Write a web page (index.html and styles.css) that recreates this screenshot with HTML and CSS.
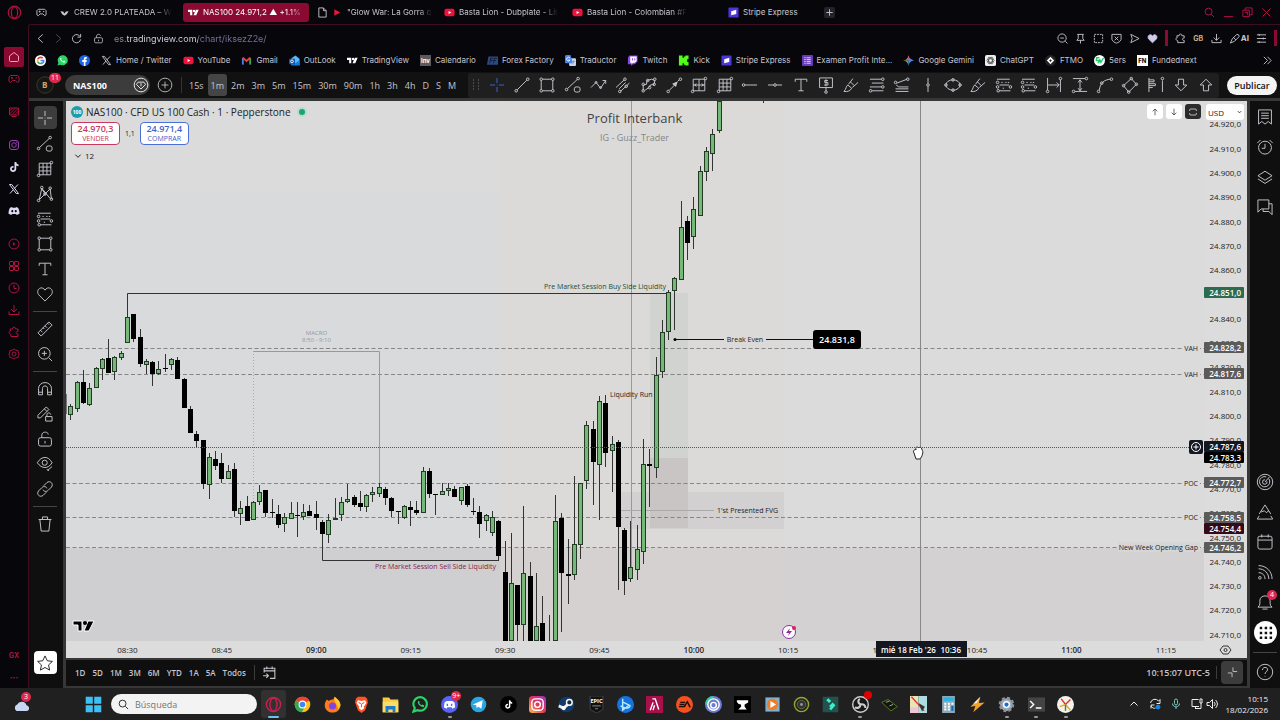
FILE: index.html
```html
<!DOCTYPE html>
<html lang="es">
<head>
<meta charset="UTF-8" />
<meta name="viewport" content="width=device-width, initial-scale=1" />
<title>NAS100 24.971,2 ▲ +1.1%</title>
<link rel="stylesheet" href="styles.css">
</head>
<body>

<!-- Shared icons -->
<svg class="sprite" aria-hidden="true">
  <symbol id="opera" viewBox="0 0 24 24"><circle cx="12" cy="12" r="10"/><ellipse cx="12" cy="12" rx="5" ry="9"/></symbol>
  <symbol id="pad" viewBox="0 0 24 24"><path d="M5 5h14l3 3v9l-3 2-4-4H9l-4 4-3-2V8z"/><path d="M6 10h4M8 8v4M15 10h3"/></symbol>
  <symbol id="home" viewBox="0 0 24 24"><path d="M3 10l9-7 9 7v9a2 2 0 0 1-2 2H5a2 2 0 0 1-2-2z"/></symbol>
  <symbol id="hatch" viewBox="0 0 24 24"><path d="M3 4h18v14H3zM7 21h10M3 10l6-6M3 16L15 4M7 18L20 5M13 18l8-8"/></symbol>
  <symbol id="insta" viewBox="0 0 24 24"><rect x="3" y="3" width="18" height="18" rx="5"/><circle cx="12" cy="12" r="4.500"/><circle cx="17.500" cy="6.500" r=".6"/></symbol>
  <symbol id="tiktok" viewBox="0 0 24 24"><path class="solid" d="M13 2h3.500c.3 3 2 4.500 4.500 4.700v3.600c-1.800 0-3.200-.5-4.500-1.400V16c0 8-12.500 8-12.500 0 0-4 3.300-6.500 7-6v3.800c-2-.5-3.400.6-3.400 2.300 0 3.200 5.400 3.100 5.400-.5z"/></symbol>
  <symbol id="xlogo" viewBox="0 0 24 24"><path d="M3 3h4.500L21 21h-4.500zM20 3l-7.500 8M4 21l7-8"/></symbol>
  <symbol id="discord" viewBox="0 0 24 24"><path class="solid" fill-rule="evenodd" d="M8 4l1 1.500h6L16 4l4 1.500c2 3.500 3 7.500 3 12L17.500 20 16 18H8l-1.500 2L1 17.500c0-4.500 1-8.500 3-12zM8.500 10a2 2.300 0 1 0 .1 4.600 2 2.300 0 0 0 0-4.600zm7 0a2 2.300 0 1 0 .1 4.600 2 2.300 0 0 0 0-4.600z"/></symbol>
  <symbol id="playc" viewBox="0 0 24 24"><circle cx="12" cy="12" r="10"/><path class="solid" d="M10 8.500l5 3.500-5 3.500z"/></symbol>
  <symbol id="tiles" viewBox="0 0 24 24"><rect x="3" y="3" width="8" height="8" rx="1"/><rect x="13" y="3" width="8" height="8" rx="1"/><rect x="3" y="13" width="8" height="8" rx="1"/><rect x="13" y="13" width="8" height="8" rx="1"/></symbol>
  <symbol id="clock" viewBox="0 0 24 24"><circle cx="12" cy="12" r="10"/><path d="M12 5v8h5"/></symbol>
  <symbol id="down" viewBox="0 0 24 24"><path d="M12 2v14M6 10l6 6 6-6M2 15v6h20v-6"/></symbol>
  <symbol id="puzzle" viewBox="0 0 24 24"><path d="M4 6h5c-1-5 7-5 6 0h5v5c-5-1-5 6 0 5v5H6v-4c-5-1-5-7-1-7z"/></symbol>
  <symbol id="gear" viewBox="0 0 24 24"><path d="M12 2l3 2 5 1 1 5 1 2-1 3-1 4-5 1-3 2-3-2-5-1-1-4-1-3 1-2 1-5 5-1z"/><circle cx="12" cy="12" r="4"/></symbol>
  <symbol id="tv" viewBox="0 0 36 20"><path class="solid" d="M0 1h14v18H7V8H0zM26 1h9l-8 18h-9z"/><circle class="solid" cx="20" cy="5" r="4"/></symbol>
  <symbol id="yt" viewBox="0 0 24 24"><rect x="1" y="4" width="22" height="16" rx="4" fill="#f0133b" stroke="none"/><path d="M10 8.500l6 3.500-6 3.500z" fill="#fff" stroke="none"/></symbol>
  <symbol id="stripe" viewBox="0 0 24 24"><rect x="1" y="1" width="22" height="22" rx="2" fill="#4b36d6" stroke="none"/><path d="M7 9l11-3v9L7 18z" fill="#fff" stroke="none"/></symbol>
  <symbol id="doc" viewBox="0 0 24 24"><path d="M4 2h10l6 6v14H4zM14 2v6h6"/></symbol>
  <symbol id="search" viewBox="0 0 24 24"><circle cx="10" cy="10" r="7.500"/><path d="M16 16l6 6"/></symbol>
  <symbol id="wa" viewBox="0 0 24 24"><path d="M1 23l2-6A11 11 0 1 1 7 21z" fill="#2cd366" stroke="none"/><path d="M8 6c-4 4 5 13 10 10l0-2-3-2-2 2c-2-1-3-2-4-4l1-1-1-3z" fill="#fff" stroke="none"/></symbol>

  <symbol id="cross" viewBox="0 0 28 28"><path d="M14 3v8M14 17v8M3 14h8M17 14h8M14 13.500v1"/></symbol>
  <symbol id="line" viewBox="0 0 28 28"><circle cx="5" cy="23" r="2"/><circle cx="23" cy="5" r="2"/><path d="M6.500 21.500l15-15"/></symbol>
  <symbol id="lineshape" viewBox="0 0 28 28"><circle cx="4" cy="21" r="2"/><circle cx="22" cy="4" r="2"/><path d="M5.500 19.500L20.500 5.500"/><rect x="16" y="17" width="9" height="8" rx="3"/></symbol>
  <symbol id="rect" viewBox="0 0 28 28"><path d="M7 5h14M7 23h14M5 7v14M23 7v14"/><circle cx="5" cy="5" r="2"/><circle cx="23" cy="5" r="2"/><circle cx="5" cy="23" r="2"/><circle cx="23" cy="23" r="2"/></symbol>
  <symbol id="zig" viewBox="0 0 28 28"><path d="M3 18l8-8 7 9 8-12M21 7h5v5"/><circle cx="11" cy="10" r="1.500"/><circle cx="18" cy="18" r="1.500"/></symbol>
  <symbol id="parallel" viewBox="0 0 28 28"><path d="M3 18L16 6M10 24l14-13M8 20l10-10"/><circle cx="17" cy="5" r="2"/><circle cx="9" cy="24" r="2"/><circle cx="19" cy="16" r="2"/></symbol>
  <symbol id="poly" viewBox="0 0 28 28"><path d="M5 23V14l5-1 1-6 7-2 5 2-1 6-6 1-2 4-6 4"/><circle cx="5" cy="23" r="2"/><circle cx="5" cy="13" r="2"/><circle cx="12" cy="7" r="2"/><circle cx="23" cy="5" r="2"/><circle cx="22" cy="13" r="2"/><circle cx="15" cy="18" r="2"/></symbol>
  <symbol id="arrow" viewBox="0 0 28 28"><circle cx="5" cy="24" r="2"/><circle cx="24" cy="5" r="2"/><path d="M7 22l8-8M20 8l2-2"/><path class="solid" d="M20 8l-9 4 6 5z"/></symbol>
  <symbol id="fibbox" viewBox="0 0 28 28"><path d="M5 5h18v18H5zM14 5v18M5 14h18M10 12l-3 2 3 2M18 12l3 2-3 2"/><circle cx="24" cy="4" r="2"/><circle cx="4" cy="24" r="2"/></symbol>
  <symbol id="grid" viewBox="0 0 28 28"><path d="M5 5h18v18H5zM5 11h18M5 17h18M11 5v18M17 5v18"/><circle cx="24" cy="4" r="2"/><circle cx="4" cy="24" r="2"/></symbol>
  <symbol id="ray" viewBox="0 0 28 28"><circle cx="4" cy="14" r="2"/><path d="M6 14h19"/></symbol>
  <symbol id="hline" viewBox="0 0 28 28"><circle cx="14" cy="14" r="2"/><path d="M3 14h9M16 14h9"/></symbol>
  <symbol id="vline" viewBox="0 0 28 28"><circle cx="14" cy="14" r="2"/><path d="M14 3v9M14 16v9"/></symbol>
  <symbol id="text" viewBox="0 0 28 28"><path d="M5 9V5h18v4M14 5v18M10 23h8"/></symbol>
  <symbol id="money" viewBox="0 0 28 28"><path d="M4 3h20v15H4zM14 18v5M17 7h-5v3h5v4h-6M14 5v11"/><circle cx="14" cy="25" r="2"/></symbol>
  <symbol id="measure" viewBox="0 0 28 28"><path d="M4 23L12 7h12l-6 12H6M12 7l4 4 8-4"/><circle cx="5" cy="23" r="2"/></symbol>
  <symbol id="brush" viewBox="0 0 28 28"><path d="M3 24c6 1 10-1 12-5l-6-5c-3 2-2 6-6 10zM10 13L17 4M16 18l9-8M13 9l6 6"/></symbol>
  <symbol id="fib" viewBox="0 0 28 28"><path d="M3 5h18M6 11h18M3 17h18M6 23h18"/><circle cx="23" cy="5" r="2"/><circle cx="4" cy="23" r="2"/><circle cx="23" cy="17" r="2"/></symbol>
  <symbol id="fan" viewBox="0 0 28 28"><path d="M6 11l16-6M5 14l4 3h15M4 20h20M4 24h20"/><circle cx="4" cy="10" r="2"/><circle cx="23" cy="5" r="2"/></symbol>
  <symbol id="ellipse" viewBox="0 0 28 28"><ellipse cx="14" cy="14" rx="11" ry="8"/><circle cx="3" cy="14" r="2"/><circle cx="25" cy="14" r="2"/><circle cx="14" cy="6" r="2"/><circle cx="14" cy="22" r="2"/></symbol>
  <symbol id="pos" viewBox="0 0 28 28"><path d="M3 5h20M7 14h15M7 23h17M10 10h2M16 10h2M20 10h2M12 19h2"/><circle cx="4" cy="10" r="2"/><circle cx="4" cy="17" r="2"/><circle cx="24" cy="17" r="2"/><circle cx="5" cy="23" r="2"/></symbol>
  <symbol id="range" viewBox="0 0 28 28"><path d="M4 3v19M24 6v19M5 14h17M18 10l4 4-4 4"/><circle cx="24" cy="4" r="2"/><circle cx="4" cy="24" r="2"/></symbol>
  <symbol id="vrange" viewBox="0 0 28 28"><path d="M3 4h19M6 24h19M14 6v17M11 10l3-4 3 4M11 19l3 4 3-4"/><circle cx="24" cy="4" r="2"/><circle cx="4" cy="24" r="2"/></symbol>
  <symbol id="curve" viewBox="0 0 28 28"><path d="M5 22c2-12 8-16 17-17"/><circle cx="4" cy="24" r="2"/><circle cx="9" cy="11" r="2"/><circle cx="24" cy="5" r="2"/></symbol>
  <symbol id="rotrect" viewBox="0 0 28 28"><path d="M4 15L16 4l8 9-12 12z"/><circle cx="4" cy="15" r="2"/><circle cx="16" cy="4" r="2"/><circle cx="24" cy="13" r="2"/><circle cx="12" cy="25" r="2"/></symbol>
  <symbol id="profile" viewBox="0 0 28 28"><path d="M3 3v22M3 6h8v3H3M3 12h10v3H3M3 18h6M24 7v18"/><circle cx="24" cy="4" r="2"/></symbol>
  <symbol id="arrdown" viewBox="0 0 28 28"><path d="M10 5h8v9h5l-9 9-9-9h5z"/></symbol>
  <symbol id="arrup" viewBox="0 0 28 28"><path d="M10 23h8v-9h5l-9-9-9 9h5z"/></symbol>
  <symbol id="pattern" viewBox="0 0 28 28"><path d="M5 23L9 5l13 16M6 22L22 6l2 16M9 6l6 9"/><circle cx="4" cy="24" r="2"/><circle cx="9" cy="4" r="2"/><circle cx="22" cy="5" r="2"/><circle cx="24" cy="22" r="2"/><circle cx="14" cy="14" r="2"/></symbol>
  <symbol id="heart" viewBox="0 0 28 28"><path d="M14 25L4 15C-1 7 9 0 14 8c5-8 15-1 10 7z"/></symbol>
  <symbol id="ruler" viewBox="0 0 28 28"><path d="M3 20L20 3l5 5L8 25zM7 16l3 3M11 12l2 2M14 9l3 3M18 5l2 2"/></symbol>
  <symbol id="zoom" viewBox="0 0 28 28"><circle cx="13" cy="13" r="9"/><path d="M20 20l5 5M13 9v8M9 13h8"/></symbol>
  <symbol id="magnet" viewBox="0 0 28 28"><path d="M4 23V13a10 9 0 0 1 20 0v10h-6V13c0-5-8-5-8 0v10zM4 19h6M18 19h6"/></symbol>
  <symbol id="pencillock" viewBox="0 0 28 28"><path d="M3 16L16 3l4 4L7 20H3zM15 18h10v7H15zM17 18v-3c0-4 6-3 6 0M13 6l4 4"/></symbol>
  <symbol id="lock" viewBox="0 0 28 28"><rect x="4" y="12" width="20" height="13" rx="3"/><path d="M9 12V8c0-6 10-6 10-1M14 17v4"/></symbol>
  <symbol id="eye" viewBox="0 0 28 28"><path d="M2 12c7-11 17-11 23 0-6 10-16 10-23 0zM18 24l7-6M17 22l3 3"/><circle cx="13.500" cy="12" r="4"/></symbol>
  <symbol id="link" viewBox="0 0 28 28"><path d="M12 9l5-5c5-4 11 2 7 7l-5 5c-3 3-7 2-8-1M16 19l-5 5c-5 4-11-2-7-7l5-5c3-3 7-2 8 1"/></symbol>
  <symbol id="trash" viewBox="0 0 28 28"><path d="M4 7h20M10 7V3h8v4M6 7l2 18h12l2-18"/></symbol>
  <symbol id="star" viewBox="0 0 28 28"><path d="M14 3l3.500 7.500 8 1-6 5.500 1.700 8L14 21l-7.200 4 1.700-8-6-5.500 8-1z"/></symbol>
  <symbol id="watch" viewBox="0 0 28 28"><path d="M4 3h20v22l-5-4-5 4-5-4-5 4zM8 8h12M8 12h12M8 16h12"/></symbol>
  <symbol id="alarm" viewBox="0 0 28 28"><circle cx="14" cy="15" r="10"/><path d="M14 9v7H9M2 8l5-5M21 3l5 5"/></symbol>
  <symbol id="layers" viewBox="0 0 28 28"><path d="M3 12l11-7 11 7-11 7zM3 17l11 7 11-7"/></symbol>
  <symbol id="chat" viewBox="0 0 28 28"><path d="M3 3h17v14H8l-5 5zM20 9h5v17l-5-5h-9v-4"/></symbol>
  <symbol id="target" viewBox="0 0 28 28"><circle cx="14" cy="14" r="12"/><path d="M20 9a8 8 0 1 1-4-3M17 13a3.500 3.500 0 1 1-3-2.500M14 14l7-8"/></symbol>
  <symbol id="idea" viewBox="0 0 28 28"><path d="M5 17L14 3l9 14M8 14l5-2 3 3 4-3M5 20l-3 5h24l-3-5"/></symbol>
  <symbol id="cal" viewBox="0 0 28 28"><rect x="3" y="5" width="22" height="20" rx="3"/><path d="M3 11h22M9 2v5M19 2v5"/></symbol>
  <symbol id="feed" viewBox="0 0 28 28"><path d="M4 4c12 0 21 9 21 21M4 9c9 0 16 7 16 16M4 15c6 0 10 4 10 10"/><circle cx="6" cy="23" r="2"/></symbol>
  <symbol id="bell" viewBox="0 0 28 28"><path d="M3 22c4-3 3-7 3-10 0-10 16-10 16 0 0 3-1 7 3 10zM10 25h8"/></symbol>
  <symbol id="help" viewBox="0 0 28 28"><circle cx="14" cy="14" r="12"/><path d="M10 11c0-6 9-5 8 0-1 3-4 3-4 6M14 20v1"/></symbol>
  <symbol id="goto" viewBox="0 0 28 28"><path d="M4 14V6h20v19h-9M4 11h20M9 3v5M19 3v5M2 20h9M8 16l4 4-4 4"/></symbol>
</svg>

<div class="browser">

  <aside class="gx">
    <a class="gx-logo" href="#" aria-label="Opera"><svg class="ic"><use href="#opera"/></svg></a>
    <a class="gx-home" href="#" aria-label="Inicio"><svg class="ic"><use href="#home"/></svg></a>
    <a href="#" aria-label="GX Corner"><svg class="ic"><use href="#pad"/></svg></a>
    <a class="group" href="#" aria-label="GX Mods"><svg class="ic"><use href="#hatch"/></svg></a>
    <a class="group insta" href="#" aria-label="Instagram"><svg class="ic"><use href="#insta"/></svg></a>
    <a class="light" href="#" aria-label="TikTok"><svg class="ic"><use href="#tiktok"/></svg></a>
    <a class="light" href="#" aria-label="X"><svg class="ic"><use href="#xlogo"/></svg></a>
    <a class="light" href="#" aria-label="Discord"><svg class="ic"><use href="#discord"/></svg></a>
    <a class="group" href="#" aria-label="Player"><svg class="ic"><use href="#playc"/></svg></a>
    <a href="#" aria-label="Espacios"><svg class="ic"><use href="#tiles"/></svg></a>
    <a href="#" aria-label="Historial"><svg class="ic"><use href="#clock"/></svg></a>
    <a href="#" aria-label="Descargas"><svg class="ic"><use href="#down"/></svg></a>
    <a href="#" aria-label="Extensiones"><svg class="ic"><use href="#puzzle"/></svg></a>
    <a href="#" aria-label="Ajustes"><svg class="ic"><use href="#gear"/></svg></a>
    <a class="gx-foot" href="#">GX</a>
    <a class="gx-more" href="#">•••</a>
  </aside>

  <div class="window">
    <nav class="tabs">
      <a class="tab-pad" href="#" aria-label="GX"><svg class="ic"><use href="#pad"/></svg></a>
      <a class="tab tab-crew" href="#"><svg class="ic" viewBox="0 0 24 24"><path class="solid" d="M3 9l6 1 3 4 3-4 6-1-4 7-5 3-5-3z"/></svg><span>CREW 2.0 PLATEADA – W</span></a>
      <a class="tab tab-active" href="#"><svg class="ic"><use href="#tv"/></svg><span>NAS100 24.971,2 ▲ +1.1%</span></a>
      <a class="tab-doc" href="#" aria-label="Documento"><svg class="ic"><use href="#doc"/></svg></a>
      <a class="tab tab-glow" href="#"><svg class="ic" viewBox="0 0 24 24"><path d="M5 5l13 7-13 7z" fill="#f0133b" stroke="none"/></svg><span>"Glow War: La Gorra q</span></a>
      <a class="tab tab-yt" href="#"><svg class="ic"><use href="#yt"/></svg><span>Basta Lion - Dubplate - Lit</span></a>
      <a class="tab tab-yt" href="#"><svg class="ic"><use href="#yt"/></svg><span>Basta Lion - Colombian #F</span></a>
      <a class="tab tab-stripe" href="#"><svg class="ic"><use href="#stripe"/></svg><span>Stripe Express</span></a>
      <button class="new-tab" aria-label="Nueva pestaña"><svg class="ic" viewBox="0 0 24 24"><path d="M12 5v14M5 12h14"/></svg></button>
      <div class="win-buttons">
        <button aria-label="Buscar"><svg class="ic"><use href="#search"/></svg></button>
        <button aria-label="Minimizar"><svg class="ic" viewBox="0 0 24 24"><path d="M2 21h20"/></svg></button>
        <button aria-label="Restaurar"><svg class="ic" viewBox="0 0 24 24"><path d="M2 7h14v14H2zM7 7V2h15v15h-6M6 12h6v5"/></svg></button>
        <button aria-label="Cerrar"><svg class="ic" viewBox="0 0 24 24"><path d="M3 3l18 18M21 3L3 21"/></svg></button>
      </div>
    </nav>

    <div class="page">
      <div class="address">
        <button aria-label="Atrás"><svg class="ic" viewBox="0 0 24 24"><path d="M17 3L7 12l10 9"/></svg></button>
        <button class="dim" aria-label="Adelante"><svg class="ic" viewBox="0 0 24 24"><path d="M7 3l10 9-10 9"/></svg></button>
        <button aria-label="Recargar"><svg class="ic" viewBox="0 0 24 24"><path d="M20 8a9 9 0 1 0 1 6M21 2v7h-7"/></svg></button>
        <button class="secure" aria-label="Seguridad"><svg class="ic"><use href="#lock"/></svg></button>
        <input class="url" type="text" aria-label="Dirección" value="es.tradingview.com/chart/iksezZ2e/">
        <div class="address-tools">
          <button aria-label="Zoom"><svg class="ic" viewBox="0 0 24 24"><circle cx="11" cy="11" r="9"/><path d="M7 11h8M18 18l5 5"/></svg></button>
          <button aria-label="Fijar"><svg class="ic" viewBox="0 0 24 24"><path d="M5 3h14M7 3v9l-3 4h16l-3-4V3M12 16v7"/></svg></button>
          <button aria-label="Captura"><svg class="ic" viewBox="0 0 24 24"><path stroke-dasharray="4 2" d="M3 3h18v18H3z"/></svg></button>
          <button aria-label="Bloqueador"><svg class="ic" viewBox="0 0 24 24"><path d="M2 3h20v11c-2 5-6 7-10 8-4-1-8-3-10-8zM8 8l8 8M16 8l-8 8"/></svg></button>
          <button aria-label="Enviar"><svg class="ic" viewBox="0 0 24 24"><path d="M4 3l18 9-18 9 3-9z"/></svg></button>
          <button class="fav" aria-label="Favorito"><svg class="ic"><use href="#heart"/></svg></button>
          <i class="mark"></i>
          <button aria-label="Extensiones"><svg class="ic"><use href="#puzzle"/></svg></button>
          <button class="gb" aria-label="GB">GB</button>
          <button aria-label="Descargas"><svg class="ic"><use href="#down"/></svg></button>
          <button class="ai"><svg class="ic" viewBox="0 0 24 24"><path d="M3 22l4-9L17 3l4 1 1 4-10 10zM9 9l6 6"/></svg>AI</button>
          <button aria-label="Menú"><svg class="ic" viewBox="0 0 24 24"><path d="M2 4h20M2 12h20M2 20h20M7 2v4M16 10v4M7 18v4"/></svg></button>
          <i class="mark"></i>
        </div>
      </div>

      <nav class="bookmarks">
        <a href="#" aria-label="Google"><svg viewBox="0 0 24 24"><circle cx="12" cy="12" r="12" fill="#fff"/><g fill="none" stroke-width="3.500"><path d="M17 7a7 7 0 0 0-11 2" stroke="#ea4335"/><path d="M6 9a7 7 0 0 0 0 6" stroke="#fbbc05"/><path d="M6 15a7 7 0 0 0 10 2.500" stroke="#34a853"/><path d="M16 18a7 7 0 0 0 3-6h-7" stroke="#4285f4"/></g></svg></a>
        <a href="#" aria-label="WhatsApp"><svg><use href="#wa"/></svg></a>
        <a href="#" aria-label="Facebook"><svg viewBox="0 0 24 24"><circle cx="12" cy="12" r="12" fill="#1a66e8"/><path d="M10.500 24v-9H7v-4h3.500V9c0-4 2-5 6.500-4.500V8c-2.500 0-3 .3-3 2v1h3l-.5 4H14v9z" fill="#fff"/></svg></a>
        <a href="#"><svg class="ic"><use href="#xlogo"/></svg>Home / Twitter</a>
        <a href="#"><svg><use href="#yt"/></svg>YouTube</a>
        <a href="#"><svg viewBox="0 0 24 24" fill="none" stroke-width="4"><path d="M4 21V6" stroke="#4285f4"/><path d="M20 21V6" stroke="#34a853"/><path d="M4 6l8 7 8-7" stroke="#ea4335"/></svg>Gmail</a>
        <a href="#"><svg viewBox="0 0 24 24"><path d="M5 7l9-6 9 7v14H5z" fill="#58b8f5"/><path d="M5 12l9 6 9-6v11H5z" fill="#1678d8"/><rect y="8" width="13" height="12" rx="2" fill="#1054b0"/><circle cx="6.500" cy="14" r="3" fill="none" stroke="#fff" stroke-width="2"/></svg>OutLook</a>
        <a href="#"><svg class="ic wht"><use href="#tv"/></svg>TradingView</a>
        <a href="#"><b class="inv">Inv</b>Calendario</a>
        <a href="#"><svg viewBox="0 0 24 24"><path d="M3 3h21v18H0z" fill="#2d4a80"/><path d="M6 18l2-11h6M7 12h5M14 18l2-11h6M15 12h5" fill="none" stroke="#101d3a" stroke-width="2"/></svg>Forex Factory</a>
        <a href="#"><svg viewBox="0 0 24 24"><rect x="9" y="7" width="15" height="17" rx="2" fill="#c8d3e6"/><path d="M2 0h10l5 18H2a2 2 0 0 1-2-2V2z" fill="#4a84e8"/><path d="M11 7a4 4 0 1 0 0 4H7" fill="none" stroke="#fff" stroke-width="2"/><path d="M16 14h6M19 12c0 4-1 6-3 8" stroke="#667" fill="none"/></svg>Traductor</a>
        <a href="#"><svg viewBox="0 0 24 24"><path d="M5 1h18v13l-6 6h-4l-4 4v-4H2V6z" fill="#8b45e8"/><path d="M7 3h14v10l-4 4h-4l-3 3v-3H7z" fill="#fff"/><path d="M12 7v5M17 7v5" stroke="#8b45e8" stroke-width="2"/></svg>Twitch</a>
        <a href="#"><svg viewBox="0 0 24 24"><path d="M2 1h8v5h3V3h3V1h7v8h-3v6h3v8h-7v-2h-3v-3h-3v5H2z" fill="#53fc18"/></svg>Kick</a>
        <a href="#"><svg><use href="#stripe"/></svg>Stripe Express</a>
        <a href="#"><svg viewBox="0 0 24 24"><rect width="24" height="24" rx="2" fill="#673ab7"/><path d="M5 6h3M5 10h3M5 14h3M5 18h3M10 6h9M10 10h9M10 14h9M10 18h9" stroke="#e6dcf5" stroke-width="2"/></svg>Examen Profit Inte...</a>
        <a href="#"><svg viewBox="0 0 24 24"><path d="M12 0c1 7 5 11 12 12H0C7 11 11 7 12 0z" fill="#e65a50"/><path d="M0 12h12v12C11 17 7 13 0 12z" fill="#4fae5a"/><path d="M12 6l12 6c-7 1-11 5-12 12z" fill="#4285f4"/></svg>Google Gemini</a>
        <a href="#"><svg viewBox="0 0 24 24"><rect width="24" height="24" rx="4" fill="#eee"/><g fill="none" stroke="#444" stroke-width="1.500"><ellipse cx="12" cy="12" rx="8" ry="4"/><ellipse cx="12" cy="12" rx="8" ry="4" transform="rotate(60 12 12)"/><ellipse cx="12" cy="12" rx="8" ry="4" transform="rotate(120 12 12)"/></g></svg>ChatGPT</a>
        <a href="#"><svg viewBox="0 0 24 24"><circle cx="12" cy="12" r="12" fill="#222"/><path d="M12 4l8 8-8 8-8-8zM12 9l-3 3 3 3 3-3z" fill="#fff" fill-rule="evenodd"/></svg>FTMO</a>
        <a href="#"><svg viewBox="0 0 24 24"><circle cx="12" cy="12" r="12" fill="#fff"/><path d="M12 6H6l-1 6h5c3 0 2 5-2 5M12 9l3 7 6-10" fill="none" stroke="#20c868" stroke-width="3"/></svg>5ers</a>
        <a href="#"><b class="fn">FN</b>Fundednext</a>
        <button class="more-marks" aria-label="Más marcadores"><svg class="ic" viewBox="0 0 24 24"><path d="M4 4l8 8-8 8M12 4l8 8-8 8"/></svg></button>
      </nav>

      <header class="toolbar">
        <div class="account"><svg viewBox="0 0 24 24"><circle cx="12" cy="12" r="11" fill="#171717" stroke="#4a4128"/></svg><span>B</span><em>11</em></div>
        <button class="symbol">NAS100<svg class="ic" viewBox="0 0 28 28"><circle cx="14" cy="14" r="12"/><path d="M9 9h10l3 4-8 8-8-8zM14 16v-5"/></svg></button>
        <button class="compare" aria-label="Comparar"><svg class="ic" viewBox="0 0 28 28"><circle cx="14" cy="14" r="12"/><path d="M14 8v12M8 14h12"/></svg></button>
        <div class="frames">
          <button>15s</button><button class="on">1m</button><button>2m</button><button>3m</button><button>5m</button><button>15m</button><button>30m</button><button>90m</button><button>1h</button><button>3h</button><button>4h</button><button>D</button><button>S</button><button>M</button>
        </div>
        <div class="draw">
          <svg class="grip" viewBox="0 0 16 18"><path d="M5 4h1M10 4h1M5 7h1M10 7h1M5 10h1M10 10h1M5 13h1M10 13h1"/></svg>
          <button class="blue" aria-label="Cruz"><svg class="ic"><use href="#cross"/></svg></button>
          <button aria-label="Línea"><svg class="ic"><use href="#line"/></svg></button>
          <button aria-label="Rectángulo"><svg class="ic"><use href="#rect"/></svg></button>
          <button aria-label="Formas"><svg class="ic"><use href="#lineshape"/></svg></button>
          <button aria-label="Trazado"><svg class="ic"><use href="#zig"/></svg></button>
          <button aria-label="Canal"><svg class="ic"><use href="#parallel"/></svg></button>
          <button aria-label="Polilínea"><svg class="ic"><use href="#poly"/></svg></button>
          <button aria-label="Flecha"><svg class="ic"><use href="#arrow"/></svg></button>
          <button aria-label="Caja de Gann"><svg class="ic"><use href="#fibbox"/></svg></button>
          <button aria-label="Cuadrícula"><svg class="ic"><use href="#grid"/></svg></button>
          <button aria-label="Rayo"><svg class="ic"><use href="#ray"/></svg></button>
          <button aria-label="Línea horizontal"><svg class="ic"><use href="#hline"/></svg></button>
          <button aria-label="Texto"><svg class="ic"><use href="#text"/></svg></button>
          <button aria-label="Nota de precio"><svg class="ic"><use href="#money"/></svg></button>
          <button aria-label="Medir"><svg class="ic"><use href="#brush"/></svg></button>
          <button aria-label="Retroceso"><svg class="ic"><use href="#fib"/></svg></button>
          <button aria-label="Abanico"><svg class="ic"><use href="#fan"/></svg></button>
          <button aria-label="Línea vertical"><svg class="ic"><use href="#vline"/></svg></button>
          <button aria-label="Elipse"><svg class="ic"><use href="#ellipse"/></svg></button>
          <button aria-label="Pincel"><svg class="ic"><use href="#brush"/></svg></button>
          <button aria-label="Posición larga"><svg class="ic"><use href="#pos"/></svg></button>
          <button aria-label="Posición corta"><svg class="ic"><use href="#pos"/></svg></button>
          <button aria-label="Rango de fechas"><svg class="ic"><use href="#range"/></svg></button>
          <button aria-label="Rango de precios"><svg class="ic"><use href="#vrange"/></svg></button>
          <button aria-label="Curva"><svg class="ic"><use href="#curve"/></svg></button>
          <button aria-label="Rectángulo girado"><svg class="ic"><use href="#rotrect"/></svg></button>
          <button aria-label="Perfil de volumen"><svg class="ic"><use href="#profile"/></svg></button>
          <button aria-label="Flecha abajo"><svg class="ic"><use href="#arrdown"/></svg></button>
          <button aria-label="Flecha arriba"><svg class="ic"><use href="#arrup"/></svg></button>
        </div>
        <button class="publish">Publicar</button>
      </header>

      <div class="work">
        <aside class="tools">
          <button class="on" aria-label="Cruz"><svg class="ic"><use href="#cross"/></svg></button>
          <button aria-label="Líneas"><svg class="ic"><use href="#lineshape"/></svg></button>
          <button aria-label="Gann"><svg class="ic"><use href="#grid"/></svg></button>
          <button aria-label="Patrones"><svg class="ic"><use href="#pattern"/></svg></button>
          <button aria-label="Predicción"><svg class="ic"><use href="#pos"/></svg></button>
          <button aria-label="Formas"><svg class="ic"><use href="#rect"/></svg></button>
          <button aria-label="Texto"><svg class="ic"><use href="#text"/></svg></button>
          <button aria-label="Iconos"><svg class="ic"><use href="#heart"/></svg></button>
          <hr>
          <button aria-label="Regla"><svg class="ic"><use href="#ruler"/></svg></button>
          <button aria-label="Acercar"><svg class="ic"><use href="#zoom"/></svg></button>
          <hr>
          <button aria-label="Imán"><svg class="ic"><use href="#magnet"/></svg></button>
          <button aria-label="Modo dibujo"><svg class="ic"><use href="#pencillock"/></svg></button>
          <button aria-label="Bloquear"><svg class="ic"><use href="#lock"/></svg></button>
          <button aria-label="Ocultar"><svg class="ic"><use href="#eye"/></svg></button>
          <button aria-label="Enlazar"><svg class="ic"><use href="#link"/></svg></button>
          <hr>
          <button aria-label="Eliminar"><svg class="ic"><use href="#trash"/></svg></button>
          <button class="starred" aria-label="Favoritos"><svg class="ic"><use href="#star"/></svg></button>
        </aside>

        <main class="center">
          <section class="chart">
            <svg id="chart" viewBox="66 101 1181 557" preserveAspectRatio="xMinYMin meet"></svg>
            <div class="overlay">
              <div class="legend">
                <h1><b>100</b>NAS100 · CFD US 100 Cash · 1 · Pepperstone<i></i></h1>
                <div class="quotes">
                  <button class="sell"><strong>24.970,3</strong>VENDER</button>
                  <span>1,1</span>
                  <button class="buy"><strong>24.971,4</strong>COMPRAR</button>
                </div>
                <button class="count"><svg class="ic" viewBox="0 0 24 24"><path d="M4 8l8 8 8-8"/></svg>12</button>
              </div>
              <div class="scale-tools">
                <button aria-label="Subir"><svg class="ic" viewBox="0 0 24 24"><path d="M12 22V3M5 10l7-7 7 7"/></svg></button>
                <button aria-label="Bajar"><svg class="ic" viewBox="0 0 24 24"><path d="M12 2v19M5 14l7 7 7-7"/></svg></button>
                <button class="dark" aria-label="Maximizar"><svg class="ic" viewBox="0 0 24 24"><path d="M2 9V6a3 3 0 0 1 3-3h14a3 3 0 0 1 3 3v3M2 15v3a3 3 0 0 0 3 3h14a3 3 0 0 0 3-3v-3"/></svg></button>
                <label class="currency"><select aria-label="Moneda"><option>USD</option></select><svg class="ic" viewBox="0 0 24 24"><path d="M4 8l8 8 8-8"/></svg></label>
              </div>
            </div>
          </section>

          <footer class="ranges">
            <button>1D</button><button>5D</button><button>1M</button><button>3M</button><button>6M</button><button>YTD</button><button>1A</button><button>5A</button><button>Todos</button>
            <button class="goto" aria-label="Ir a"><svg class="ic"><use href="#goto"/></svg></button>
            <span class="utc">10:15:07 UTC-5</span>
            <button class="shrink" aria-label="Contraer"><svg class="ic" viewBox="0 0 28 28"><path d="M4 15h9v9M24 12h-9V3"/></svg></button>
          </footer>
        </main>

        <aside class="panel">
          <button aria-label="Lista"><svg class="ic"><use href="#watch"/></svg></button>
          <button aria-label="Alertas"><svg class="ic"><use href="#alarm"/></svg></button>
          <button aria-label="Capas"><svg class="ic"><use href="#layers"/></svg></button>
          <button aria-label="Chat"><svg class="ic"><use href="#chat"/></svg></button>
          <button class="low" aria-label="Screener"><svg class="ic"><use href="#target"/></svg></button>
          <button aria-label="Ideas"><svg class="ic"><use href="#idea"/></svg></button>
          <button aria-label="Calendario"><svg class="ic"><use href="#cal"/></svg></button>
          <button aria-label="Noticias"><svg class="ic"><use href="#feed"/></svg></button>
          <button aria-label="Notificaciones"><svg class="ic"><use href="#bell"/></svg><em>4</em></button>
          <button class="apps" aria-label="Productos"><svg viewBox="0 0 28 28"><circle cx="14" cy="14" r="14" fill="#fff"/><path d="M7 7h3v3H7zM13 7h3v3h-3zM19 7h3v3h-3zM7 13h3v3H7zM13 13h3v3h-3zM19 13h3v3h-3zM7 19h3v3H7zM13 19h3v3h-3zM19 19h3v3h-3z" fill="#111"/></svg></button>
          <hr>
          <button aria-label="Ayuda"><svg class="ic"><use href="#help"/></svg></button>
        </aside>
      </div>
    </div>
  </div>
</div>

<footer class="taskbar">
  <button class="weather" aria-label="El tiempo"><svg viewBox="0 0 24 24"><path d="M5 21a5 5 0 0 1 1-9 7 7 0 0 1 13 1c5 1 5 8 0 8z" fill="#c9d8f2"/></svg><em>3</em></button>
  <button class="start" aria-label="Inicio"><svg viewBox="0 0 24 24" fill="#3fc0f5"><path d="M1 1h10v10H1zM13 1h10v10H13zM1 13h10v10H1zM13 13h10v10H13z"/></svg></button>
  <label class="find"><svg class="ic"><use href="#search"/></svg><input type="text" placeholder="Búsqueda" aria-label="Búsqueda"></label>
  <div class="apps-row">
    <button class="current" aria-label="Opera GX"><svg class="ic"><use href="#opera"/></svg></button>
    <button aria-label="Chrome"><svg viewBox="0 0 24 24"><circle cx="12" cy="12" r="11" fill="#fbc116"/><path d="M12 12L2.500 6.500a11 11 0 0 1 19 0z" fill="#e94235"/><path d="M12 12L2.500 6.500A11 11 0 0 0 11 23l4-7z" fill="#34a853"/><circle cx="12" cy="12" r="5.500" fill="#fff"/><circle cx="12" cy="12" r="4" fill="#4285f4"/></svg></button>
    <button aria-label="Firefox"><svg viewBox="0 0 24 24"><path d="M4 5l3 2c2-2 4-2 6-2l2-4c5 4 9 8 8 13-1 12-20 13-22 0 0-4 1-6 3-9z" fill="#ff7a1c"/><path d="M15 1c5 4 9 8 8 13l-3 5C20 12 13 9 15 1z" fill="#ffca28"/><circle cx="12" cy="14" r="5" fill="#8044e0"/></svg></button>
    <button aria-label="Brave"><svg viewBox="0 0 24 24"><path d="M7 1h10l3 3 1 5-4 11-5 4-5-4L3 9l1-5z" fill="#fb542b"/><path d="M7 6l5 1 5-1 2 4-4 5 1 2-4 3-4-3 1-2-4-5z" fill="#fff"/><path d="M8 9l3 2M16 9l-3 2M12 11v5" stroke="#fb542b" stroke-width="1.500"/></svg></button>
    <button aria-label="Explorador"><svg viewBox="0 0 24 24"><path d="M1 2h9l2 3h11v18H1z" fill="#f9c940"/><path d="M1 8h22v15H1z" fill="#fbdc6a"/><path d="M5 23v-9h14v9h-4v-4H9v4z" fill="#2279c4"/></svg></button>
    <button aria-label="WhatsApp"><svg viewBox="0 0 24 24"><path d="M2 22l2-5A9.500 9.500 0 1 1 8 20z" fill="#202020" stroke="#2cd366" stroke-width="3"/><path d="M9 7c-3 3 4 10 8 8v-2l-3-1-1 1-3-3 1-1-1-2z" fill="#2cd366"/></svg></button>
    <button class="running" aria-label="Discord"><svg viewBox="0 0 24 24"><circle cx="12" cy="12" r="12" fill="#5865f2"/><path d="M8 7h8l3 2 1 7-4 2-1-2H9l-1 2-4-2 1-7z" fill="#fff"/><path d="M9 11v3M15 11v3" stroke="#5865f2" stroke-width="2"/></svg><em>9+</em></button>
    <button aria-label="Telegram"><svg viewBox="0 0 24 24"><circle cx="12" cy="12" r="11" fill="#2ca5e0"/><path d="M4 12l14-6-2 12-4-3-3 2v-4z" fill="#fff"/></svg></button>
    <button aria-label="TikTok"><svg class="ic tk" viewBox="0 0 24 24"><circle cx="12" cy="12" r="12" fill="#000" stroke="none"/><use href="#tiktok" x="5" y="5" width="14" height="14"/></svg></button>
    <button aria-label="Instagram"><svg viewBox="0 0 24 24"><defs><linearGradient id="ig" x1="0" y1="1" x2="1" y2="0"><stop offset="0" stop-color="#fdc04b"/><stop offset=".5" stop-color="#e7335c"/><stop offset="1" stop-color="#9137c8"/></linearGradient></defs><rect width="24" height="24" rx="5" fill="url(#ig)"/><g fill="none" stroke="#fff" stroke-width="2"><rect x="4" y="4" width="16" height="16" rx="5"/><circle cx="12" cy="12" r="4"/></g></svg></button>
    <button aria-label="Steam"><svg viewBox="0 0 24 24"><circle cx="12" cy="12" r="11" fill="#123a6b"/><path d="M1 14l7 3 8-7" stroke="#e8eef5" stroke-width="4" fill="none"/><circle cx="16" cy="9" r="4" fill="#1a2c48" stroke="#fff" stroke-width="2"/><circle cx="8" cy="17" r="3" fill="#fff"/></svg></button>
    <button aria-label="Epic Games"><svg viewBox="0 0 24 24"><path d="M3 0h18v19l-9 5-9-5z" fill="#111" stroke="#555"/><text x="12" y="10" class="epic">EPIC</text><path d="M6 14h12M10 18h4" stroke="#bbb"/></svg></button>
    <button aria-label="Battle.net"><svg viewBox="0 0 24 24"><circle cx="12" cy="12" r="12" fill="#1673dc"/><path d="M8 4v16l9-7-10-5M5 14c8 6 15 2 13-1" fill="none" stroke="#b5e9ff" stroke-width="2"/></svg></button>
    <button aria-label="Apex"><svg viewBox="0 0 24 24"><path d="M0 0h24v24H0z" fill="#a8104c"/><path d="M9 4h4l5 15M10 9L6 20M12 13l-2 7" fill="none" stroke="#fff" stroke-width="2"/></svg></button>
    <button aria-label="EA"><svg viewBox="0 0 24 24"><circle cx="12" cy="12" r="12" fill="#f5501e"/><path d="M6 9h7M5 12h7M4 15h8l4-7 4 8" fill="none" stroke="#1b0b06" stroke-width="2"/></svg></button>
    <button aria-label="Ubisoft"><svg viewBox="0 0 24 24"><circle cx="12" cy="12" r="12" fill="#6b7bd0"/><path d="M2 12A10 10 0 0 1 12 2" stroke="#36c69b" stroke-width="4" fill="none"/><circle cx="12" cy="12" r="8" fill="none" stroke="#fff" stroke-width="2"/><circle cx="12" cy="13" r="4" fill="none" stroke="#fff" stroke-width="2"/></svg></button>
    <button aria-label="Anvil"><svg viewBox="0 0 24 24"><path d="M0 0h24v24H0z" fill="#000"/><path d="M4 6h16v3l-5 3v3l3 4H6l4-4v-3c-3 0-5-2-6-4z" fill="#fff"/></svg></button>
    <button aria-label="Reproductor"><svg viewBox="0 0 24 24"><path d="M2 2h20v20H2z" fill="#7cb3d2"/><circle cx="12" cy="12" r="8" fill="#f37c22"/><path d="M9 7l8 5-8 5z" fill="#fff"/></svg></button>
    <button aria-label="Monitor"><svg viewBox="0 0 24 24"><circle cx="12" cy="12" r="10" fill="#202417" stroke="#95a52e" stroke-width="2"/><circle cx="12" cy="12" r="6" fill="#333" stroke="#777"/><circle cx="12" cy="12" r="2" fill="#999"/></svg></button>
    <button aria-label="Filmora"><svg viewBox="0 0 24 24"><path d="M1 1h22v22H1z" fill="#24514e"/><path d="M6 6l3-3 4 4-3 3zM10 14l5-5 4 4-6 7-3-2 2-2z" fill="#3bf0c8"/></svg></button>
    <button class="running" aria-label="OBS"><svg viewBox="0 0 24 24"><circle cx="12" cy="12" r="11" fill="#181818" stroke="#ccc" stroke-width="2"/><path d="M12 12c-4-2-4-6-1-8M12 12c4-1 7 1 7 5M12 12c0 4-4 6-8 4" fill="none" stroke="#ccc" stroke-width="3"/></svg><em class="rec"></em></button>
    <button aria-label="Tarjeta"><svg viewBox="0 0 24 24"><path d="M1 9l9-4 13 10-9 6z" fill="#121512" stroke="#6f9d25"/><path d="M7 9l5-2M12 14l5-2" stroke="#ddd"/></svg></button>
    <button aria-label="Mapa"><svg viewBox="0 0 24 24"><path d="M0 0h12v24H0z" fill="#e9e3b6"/><path d="M12 0h12v24H12z" fill="#aedde0"/><path d="M0 16h12v8H0z" fill="#eec5d2"/><path d="M2 1l18 20" stroke="#dc3a36" stroke-width="2"/><path d="M12 10l9 5-4 7z" fill="#333"/></svg></button>
    <button aria-label="Calculadora"><svg viewBox="0 0 24 24"><path d="M3 0h18v24H3z" fill="#8da8b6"/><path d="M5 2h14v5H5z" fill="#29b5e8"/><path d="M6 11h3M11 11h3M16 11h3M6 15h3M11 15h3M6 19h3M11 19h3" stroke="#fff" stroke-width="3"/><path d="M16 14h3v7h-3z" fill="#126ab4"/></svg></button>
    <button aria-label="Winamp"><svg viewBox="0 0 24 24"><path d="M16 1L2 15l7-1-3 9L22 9l-8 1z" fill="#f0a228"/><path d="M16 1L6 11l5-1z" fill="#eee"/></svg></button>
    <button class="running" aria-label="Configuración"><svg viewBox="0 0 24 24"><circle cx="12" cy="12" r="9" fill="#a3abb3" stroke="#8a939b" stroke-width="4" stroke-dasharray="4 3"/><circle cx="12" cy="12" r="4" fill="#1671c9" stroke="#fff" stroke-width="2"/></svg></button>
    <button class="running" aria-label="Terminal"><svg viewBox="0 0 24 24"><path d="M0 2h24v20H0z" fill="#444"/><path d="M3 7l5 5-5 5M11 17h8" fill="none" stroke="#fff" stroke-width="2"/></svg></button>
    <button class="running" aria-label="Paint"><svg viewBox="0 0 24 24"><circle cx="12" cy="12" r="12" fill="#f3f2ec"/><path d="M6 4l6 8 7-7" fill="none" stroke="#d7342c" stroke-width="2"/><path d="M4 15l8-3 7 8" fill="none" stroke="#e9a82a" stroke-width="2"/><path d="M12 12v9" stroke="#3c8a48" stroke-width="2"/></svg></button>
  </div>
  <div class="tray">
    <svg class="ic" viewBox="0 0 24 24"><path d="M5 15l7-7 7 7"/></svg>
    <svg class="ic" viewBox="0 0 24 24"><path d="M3 10a9 9 0 0 1 16-4l3-3v8h-7M4 21v-7h7M4 16c3 5 7 5 9 4"/><circle cx="18" cy="18" r="4" fill="#1687e8" stroke="#1687e8"/></svg>
    <svg class="ic mic" viewBox="0 0 24 24"><rect x="9" y="2" width="6" height="12" rx="3"/><path d="M5 11c0 9 14 9 14 0M12 18v4"/></svg>
    <svg class="ic" viewBox="0 0 24 24"><path d="M2 3h13M2 3v14h14M18 2h4v8h-4zM20 10v11H8M9 17v4"/></svg>
    <svg class="ic vol" viewBox="0 0 24 24"><path d="M2 9h5l6-6v18l-6-6H2zM16 8c3 3 3 5 0 8M19 4c5 5 5 11 0 16"/></svg>
    <div class="time">10:15<br>18/02/2026</div>
  </div>
</footer>

<script src="chart.js"></script>
</body>
</html>
```

FILE: styles.css
```css
* {
  box-sizing: border-box;
}
body {
  margin: 0;
  height: 100vh;
  display: flex;
  flex-direction: column;
  overflow: hidden;
  background: #07060b;
  color: #c6c5cd;
  font-family: Inter, sans-serif;
  font-size: 8px;
}
a {
  color: inherit;
  text-decoration: none;
}
button {
  display: flex;
  align-items: center;
  justify-content: center;
  padding: 0;
  border: none;
  background: none;
  color: inherit;
  font: inherit;
  cursor: pointer;
}
svg {
  flex: none;
}
.sprite {
  position: absolute;
  width: 0;
  height: 0;
}
.ic {
  fill: none;
  stroke: currentColor;
  stroke-width: 2;
}
.solid {
  fill: currentColor;
  stroke: none;
}
em {
  font-style: normal;
}

/* Browser frame */
.browser {
  flex: 1;
  display: flex;
  min-height: 0;
}
.gx {
  width: 28px;
  display: flex;
  flex-direction: column;
  align-items: center;
  color: #b0123f;
}
.gx a {
  width: 20px;
  height: 22px;
  display: flex;
  align-items: center;
  justify-content: center;
}
.gx .ic {
  width: 12px;
  height: 12px;
}
.gx .gx-logo {
  height: 24px;
  margin-bottom: 23px;
}
.gx .gx-logo .ic {
  width: 15px;
  height: 15px;
}
.gx .gx-home {
  height: 20px;
  margin-bottom: 1px;
  border-radius: 2px;
  background: #8a0a32;
  color: #ff9db8;
}
.gx .group {
  margin-top: 11px;
}
.gx .insta {
  color: #9a3fb0;
}
.gx .light {
  color: #dcdaf0;
}
.gx .gx-foot {
  margin-top: auto;
  font-size: 7px;
  font-weight: bold;
}
.gx .gx-more {
  font-size: 5px;
}
.window {
  flex: 1;
  min-width: 0;
  display: flex;
  flex-direction: column;
}
.tabs {
  height: 24px;
  display: flex;
  align-items: center;
  padding: 0 8px 0 6px;
}
.tabs .ic {
  width: 11px;
  height: 11px;
}
.tabs a {
  display: flex;
}
.tab-pad {
  margin-right: 12px;
  padding-left: 2px;
}
.tabs .tab {
  align-items: center;
  gap: 4px;
  height: 19px;
}
.tab span {
  flex: 1;
  white-space: nowrap;
  mask-image: linear-gradient(90deg, #000 85%, transparent);
}
.tab-crew {
  width: 112px;
  margin-right: 12px;
}
.tab-active {
  width: 126px;
  margin-right: 8px;
  padding: 0 5px;
  border-radius: 3px;
  background: #8a0a32;
  color: #fff;
}
.tab-doc {
  margin-right: 4px;
}
.tab-glow {
  width: 100px;
  margin-right: 12px;
}
.tab-yt {
  width: 114px;
  margin-right: 14px;
}
.tab-stripe {
  margin-left: 28px;
}
.tab-stripe span {
  mask-image: none;
}
.new-tab {
  width: 11px;
  height: 11px;
  margin-left: 26px;
  border-radius: 2px;
  background: #23222b;
}
.win-buttons {
  margin-left: auto;
  display: flex;
  gap: 8px;
  color: #c01347;
}
.page {
  flex: 1;
  min-height: 0;
  display: flex;
  flex-direction: column;
  border-top: 1px solid #3f0c20;
  border-left: 1px solid #3f0c20;
  border-top-left-radius: 3px;
}
.address {
  height: 26px;
  display: flex;
  align-items: center;
  gap: 7px;
  padding-left: 6px;
}
.address .ic {
  width: 11px;
  height: 11px;
}
.address .dim {
  opacity: 0.4;
}
.address .secure {
  margin: 0 3px 0 4px;
}
.url {
  flex: 1;
  min-width: 0;
  padding: 0;
  border: none;
  outline: none;
  font: 9px Inter, sans-serif;
  color: transparent;
  background: linear-gradient(90deg, #8d8b9c 13px, #dddbe6 13px, #dddbe6 84px, #7c729e 84px);
  background-clip: text;
}
.address-tools {
  display: flex;
  align-items: center;
  gap: 7px;
  padding-right: 3px;
}
.fav .ic {
  fill: #cfcbe8;
  stroke: #cfcbe8;
}
.mark {
  width: 3px;
  height: 16px;
  background: #8a0a32;
}
.gb {
  width: 11px;
  color: #c9b184;
  font-size: 7px;
  font-weight: bold;
}
.ai {
  gap: 1px;
  font-weight: bold;
}
.bookmarks {
  height: 21px;
  display: flex;
  align-items: center;
  gap: 11px;
  padding: 0 7px 3px 6px;
  white-space: nowrap;
}
.bookmarks a {
  display: flex;
  align-items: center;
  gap: 4px;
}
.bookmarks svg {
  width: 11px;
  height: 11px;
}
.wht {
  color: #fff;
}
.inv,
.fn {
  width: 11px;
  height: 11px;
  background: #5b5b5b;
  color: #fff;
  font-size: 6px;
  line-height: 11px;
  text-align: center;
}
.fn {
  background: #fff;
  color: #000;
}
.more-marks {
  margin-left: auto;
}

/* Chart toolbar */
.toolbar,
.work {
  font-family: "Open Sans", sans-serif;
}
.toolbar {
  height: 29px;
  display: flex;
  align-items: center;
  padding-left: 7px;
  border-bottom: 3px solid #373737;
  background: #111;
}
.toolbar .ic {
  width: 18px;
  height: 18px;
  stroke-width: 1.5;
}
.account {
  position: relative;
  width: 29px;
  height: 18px;
}
.account svg {
  width: 18px;
  height: 18px;
}
.account span {
  position: absolute;
  left: 6px;
  top: 3px;
  color: #d0ab62;
  font-weight: bold;
}
.account em,
.panel em,
.taskbar em {
  position: absolute;
  min-width: 10px;
  height: 10px;
  border-radius: 5px;
  background: #e0284c;
  color: #fff;
  font-size: 7px;
  line-height: 10px;
  text-align: center;
}
.account em {
  top: -3px;
  right: 4px;
  min-width: 12px;
}
.symbol {
  width: 85px;
  height: 20px;
  justify-content: space-between;
  padding: 0 1px 0 8px;
  border-radius: 10px;
  background: #3c3c3c;
  color: #fff;
  font-size: 9px;
  font-weight: bold;
}
.toolbar .symbol .ic,
.toolbar .compare .ic {
  width: 16px;
  height: 16px;
}
.compare {
  margin-left: 7px;
  padding-right: 8px;
  border-right: 1px solid #333;
}
.frames {
  flex: 1;
  display: flex;
  justify-content: space-between;
  padding: 0 9px 0 4px;
}
.frames button {
  height: 22px;
  padding: 0 3px;
  border-radius: 3px;
  font-size: 9px;
}
.frames .on {
  background: #454545;
}
.draw {
  flex: 0 1 751px;
  height: 25px;
  display: flex;
  align-items: center;
  border-radius: 3px;
  background: #1f1f1f;
}
.draw button {
  flex: 1;
}
.draw .blue {
  color: #3c65c8;
}
.grip {
  width: 16px;
  height: 18px;
  stroke: #777;
}
.publish {
  width: 50px;
  height: 19px;
  margin: 0 3px 0 8px;
  border-radius: 10px;
  background: #f4f4f4;
  color: #111;
  font-size: 9px;
  font-weight: 600;
}

/* Work area */
.work {
  flex: 1;
  min-height: 0;
  display: flex;
  background: #373737;
}
.tools,
.panel {
  display: flex;
  flex-direction: column;
  align-items: center;
  background: #0f0f0f;
}
.tools {
  width: 34px;
  margin-right: 3px;
  padding: 4px 2px 0 0;
}
.tools button {
  width: 23px;
  height: 23px;
  margin: 1px 0;
  border-radius: 4px;
}
.tools .ic,
.panel svg {
  width: 18px;
  height: 18px;
  stroke-width: 1.5;
}
.tools .on {
  margin-bottom: 2px;
  background: #3c3c3c;
}
.tools hr,
.panel hr {
  width: 24px;
  height: 1px;
  margin: 5px 0 4px;
  border: none;
  background: #454545;
}
.tools .starred {
  margin: auto 0 14px;
  background: #fff;
  color: #222;
}
.center {
  flex: 1;
  min-width: 0;
  display: flex;
  flex-direction: column;
}
.chart {
  position: relative;
  flex: 1;
  min-height: 0;
  background: #dbdbdb;
}
#chart {
  display: block;
  width: 100%;
  height: 100%;
}
.overlay {
  position: absolute;
  top: 0;
  left: 0;
  right: 0;
  display: flex;
  justify-content: space-between;
  align-items: flex-start;
  padding: 3px 3px 0 5px;
  color: #222;
}
.legend h1 {
  display: flex;
  align-items: center;
  gap: 3px;
  height: 15px;
  margin: 0 0 3px;
  font-size: 10px;
  font-weight: 500;
}
.legend h1 b {
  width: 12px;
  height: 12px;
  border-radius: 50%;
  background: #1d9cab;
  color: #fff;
  font-size: 5px;
  line-height: 12px;
  text-align: center;
}
.legend h1 i {
  width: 6px;
  height: 6px;
  margin-left: 5px;
  border-radius: 50%;
  background: #1aa573;
  box-shadow: 0 0 0 2px #b7dccf;
}
.quotes {
  display: flex;
  align-items: center;
  gap: 5px;
  font-size: 7px;
}
.quotes button {
  width: 49px;
  height: 23px;
  flex-direction: column;
  border: 1px solid #c63a5f;
  border-radius: 4px;
  background: #fff;
  color: #c63a5f;
  line-height: 10px;
}
.quotes strong {
  font-size: 9px;
  font-weight: 600;
}
.quotes .buy {
  border-color: #4a6fd6;
  color: #3f63c9;
}
.count {
  gap: 3px;
  margin: 5px 0 0 3px;
}
.count .ic {
  width: 8px;
  height: 8px;
  stroke-width: 3;
}
.scale-tools {
  display: flex;
  gap: 3px;
}
.scale-tools button {
  width: 16px;
  height: 15px;
  border-radius: 3px;
  background: #fff;
}
.scale-tools .ic {
  width: 8px;
  height: 8px;
}
.scale-tools .dark {
  background: #2b2b2b;
  color: #fff;
}
.currency {
  width: 38px;
  height: 16px;
  display: flex;
  align-items: center;
  margin-left: 2px;
  padding: 0 2px;
  border-radius: 3px;
  background: #fff;
}
.currency select {
  flex: 1;
  min-width: 0;
  padding: 0;
  appearance: none;
  border: none;
  background: none;
  color: #222;
  font: 8px "Open Sans", sans-serif;
}
.currency .ic {
  width: 5px;
  stroke-width: 4;
}
.ranges {
  height: 28px;
  display: flex;
  align-items: center;
  gap: 7px;
  margin-top: 2px;
  padding: 0 4px 1px 9px;
  border-bottom: 2px solid #373737;
  background: #0f0f0f;
  font-weight: 600;
}
.ranges .goto {
  margin-left: 1px;
  padding-left: 7px;
  border-left: 1px solid #3c3c3c;
}
.goto .ic {
  width: 15px;
  height: 15px;
}
.utc {
  margin-left: auto;
  padding-right: 6px;
  border-right: 1px solid #3c3c3c;
  font-size: 9px;
}
.shrink {
  width: 22px;
  height: 23px;
  margin-left: -3px;
  border-radius: 4px;
  background: #3c3c3c;
}
.shrink .ic {
  width: 13px;
  height: 13px;
}
.panel {
  width: 30px;
  margin-left: 3px;
  padding-top: 1px;
}
.panel button {
  position: relative;
  width: 30px;
  height: 30px;
}
.panel .low {
  margin-top: auto;
}
.panel em {
  top: 3px;
  right: 3px;
}
.panel .apps svg {
  width: 23px;
  height: 23px;
}
.panel button:last-child {
  margin-bottom: 1px;
}

/* Chart drawing */
#chart text {
  font-family: "Open Sans", sans-serif;
  font-size: 8px;
  fill: #222;
}
#chart .mid {
  text-anchor: middle;
}
#chart .end {
  text-anchor: end;
}
#chart .note {
  font-size: 7px;
}
#chart .tiny {
  font-size: 6px;
  fill: #999;
}
#chart .hour {
  font-weight: 600;
}
#chart .title {
  font-size: 13px;
  fill: #444;
}
#chart .sub {
  font-size: 9px;
  fill: #858585;
}
#chart .tag {
  fill: #fff;
  font-weight: 600;
}
#chart .big {
  font-size: 9px;
}
#chart .buyside {
  fill: #164e38;
}
#chart .sellside {
  fill: #8a1b45;
}

/* Taskbar */
.taskbar {
  height: 32px;
  display: flex;
  align-items: center;
  padding: 0 12px;
  background: #202020;
  font-family: "Open Sans", sans-serif;
  color: #eee;
}
.taskbar button {
  position: relative;
}
.taskbar svg {
  width: 17px;
  height: 17px;
}
.weather {
  width: 19px;
}
.weather em {
  top: -4px;
  right: 0;
}
.start {
  margin: 0 9px 0 54px;
}
.find {
  flex: 0 1 146px;
  min-width: 0;
  height: 20px;
  display: flex;
  align-items: center;
  gap: 6px;
  padding: 0 7px;
  border-radius: 10px;
  background: #f3f3f3;
  color: #222;
}
.taskbar .find .ic {
  width: 11px;
  height: 11px;
}
.find input {
  width: 100%;
  min-width: 0;
  padding: 0;
  border: none;
  outline: none;
  background: none;
  font: 9px "Open Sans", sans-serif;
}
.apps-row {
  flex: 0 1 821px;
  display: flex;
  margin-left: 2px;
}
.apps-row button {
  flex: 1;
  height: 28px;
}
.apps-row .current {
  color: #c2103f;
}
.current::before {
  content: "";
  position: absolute;
  inset: 0 2px;
  border-radius: 3px;
  background: #ffffff14;
}
.current::after,
.running::after {
  content: "";
  position: absolute;
  bottom: 0;
  width: 4px;
  height: 2px;
  border-radius: 1px;
  background: #999;
}
.current::after {
  width: 11px;
  background: #69c3ee;
}
.apps-row em {
  top: 1px;
  right: 3px;
}
.apps-row .rec {
  min-width: 8px;
  height: 8px;
  background: #e00000;
}
.apps-row .tk {
  color: #fff;
}
.epic {
  fill: #fff;
  font: bold 8px "Open Sans", sans-serif;
  text-anchor: middle;
}
.tray {
  margin-left: auto;
  display: flex;
  align-items: center;
  gap: 9px;
}
.taskbar .tray .ic {
  width: 12px;
  height: 12px;
}
.tray .mic {
  color: #7bc9bd;
}
.tray .vol {
  margin-left: -6px;
}
.time {
  margin-left: -1px;
  line-height: 11px;
  text-align: right;
  white-space: nowrap;
}
```

FILE: chart.js
```js
const NS = 'http://www.w3.org/2000/svg';
const chart = document.getElementById('chart');

const BAR = 6.293;
const barX = i => 127.5 + i * BAR;
const priceY = p => 173 + (24900 - p) * 2.43;

function add(tag, attrs, text) {
  const el = document.createElementNS(NS, tag);
  for (const key in attrs) el.setAttribute(key, attrs[key]);
  if (text) el.textContent = text;
  chart.appendChild(el);
  return el;
}
const box = (x, y, w, h, fill, rx = 0) => add('rect', { x, y, width: w, height: h, fill, rx });
const line = (x1, y1, x2, y2, stroke, dash = 'none', w = 1) =>
  add('line', { x1, y1, x2, y2, stroke, 'stroke-width': w, 'stroke-dasharray': dash });
const label = (x, y, cls, text) => add('text', { x, y, class: cls }, text);
const path = (d, stroke, fill = 'none') => add('path', { d, stroke, fill });

// Session and zone backgrounds
box(66, 101, 434, 90, '#dbdbdb');
box(66, 191, 434, 357, '#d8dadc');
box(500, 101, 284, 447, '#dbdad9');
box(66, 548, 434, 93, '#cfcfd1');
box(500, 548, 284, 93, '#d5d1d1');
box(784, 548, 420, 93, '#d3d1d2');
box(650, 293, 38, 165, '#d0d3d0');
box(618, 492, 166, 37, '#d2d0d0');
box(650, 458, 38, 70, '#c8c5c4');

// Levels
[348.5, 374.5, 483.5, 517.5, 547.5].forEach(y => line(66, y, 1204, y, '#858585', '4 2.5'));
line(631.5, 101, 631.5, 567, '#999');
path('M253.5 502V351', '#aaa').setAttribute('stroke-dasharray', '1 2');
path('M253.5 351.5H379.5V488', '#999');
line(618, 510.5, 714, 510.5, '#aaa');
path('M127.5 317V293.5H670', '#333');
path('M322.5 534V560.5H499', '#333');

// [body top, body bottom, high, low, direction]: 1 up, 0 down
const candles = [
  [406, 415, 404, 420, 1], [382, 409, 381, 412, 1], [382, 403, 370, 404, 0], [388, 405, 383, 406, 1],
  [368, 388, 367, 388, 1], [359, 369, 358, 380, 1], [358, 373, 339, 373, 0], [357, 372, 356, 380, 1],
  [353, 358, 351, 360, 1], [317, 343, 317, 343, 1], [314, 339, 314, 342, 0], [337, 364, 329, 367, 0],
  [361, 365, 359, 374, 1], [362, 374, 361, 386, 0], [369, 374, 361, 375, 1], [368, 369, 354, 372, 0],
  [359, 365, 358, 370, 1], [360, 379, 357, 379, 0], [379, 408, 378, 408, 0], [409, 433, 406, 433, 0],
  [434, 441, 431, 447, 0], [440, 484, 440, 489, 0], [457, 485, 453, 499, 1], [459, 466, 451, 470, 0],
  [463, 479, 453, 483, 0], [471, 479, 465, 479, 1], [469, 511, 463, 517, 0], [508, 514, 501, 525, 1],
  [506, 521, 496, 521, 0], [502, 520, 501, 520, 1], [492, 502, 485, 505, 1], [490, 513, 490, 517, 0],
  [512, 513, 499, 518, 0], [514, 525, 505, 528, 0], [517, 524, 513, 532, 1], [513, 519, 502, 519, 1],
  [515, 516, 502, 537, 0], [512, 517, 504, 520, 1], [511, 516, 505, 516, 0], [514, 518, 501, 530, 0],
  [522, 534, 520, 560, 0], [520, 535, 514, 543, 1], [518, 520, 498, 520, 1], [502, 515, 497, 521, 1],
  [499, 502, 484, 503, 1], [497, 505, 495, 507, 0], [503, 507, 491, 511, 0], [495, 507, 494, 512, 1],
  [492, 495, 487, 502, 1], [487, 494, 483, 497, 1], [489, 498, 487, 505, 0], [498, 511, 497, 517, 0],
  [511, 512, 511, 524, 0], [506, 518, 505, 519, 1], [507, 510, 501, 526, 0], [510, 513, 501, 515, 0],
  [471, 513, 467, 513, 1], [471, 494, 468, 498, 0], [494, 495, 494, 515, 0], [491, 495, 483, 495, 1],
  [488, 491, 483, 496, 1], [489, 497, 486, 497, 0], [487, 501, 487, 505, 1], [486, 505, 484, 507, 0],
  [511, 512, 498, 515, 0], [512, 524, 506, 538, 0], [515, 521, 514, 531, 1], [517, 533, 511, 536, 1],
  [521, 556, 520, 561, 0], [572, 641, 541, 641, 0], [583, 641, 533, 641, 1], [585, 625, 585, 641, 0],
  [573, 625, 506, 641, 1], [576, 641, 562, 641, 0], [626, 641, 573, 641, 1], [623, 641, 596, 641, 0],
  [641, 641, 615, 641, 0], [521, 641, 495, 641, 1], [518, 573, 513, 632, 0], [574, 576, 539, 604, 0],
  [544, 575, 476, 580, 1], [483, 545, 483, 559, 1], [425, 481, 421, 489, 1], [429, 462, 421, 505, 0],
  [401, 465, 396, 520, 1], [403, 453, 395, 467, 0], [444, 451, 436, 492, 1], [442, 527, 440, 590, 0],
  [530, 581, 528, 595, 0], [567, 579, 521, 582, 1], [549, 570, 525, 580, 1], [464, 552, 439, 564, 1],
  [464, 466, 449, 507, 0], [375, 468, 357, 478, 1], [332, 372, 320, 378, 1], [292, 332, 290, 340, 1],
  [278, 291, 277, 330, 1], [227, 280, 201, 280, 1], [221, 243, 216, 260, 0], [209, 237, 197, 249, 1],
  [171, 216, 166, 216, 1], [151, 172, 147, 181, 1], [134, 154, 129, 171, 1], [101, 131, 101, 133, 1]
];
line(66.5, 394, 66.5, 414, '#777');
candles.forEach(([top, bottom, high, low, up], i) => {
  const x = Math.round(barX(i - 9) - 0.5);
  line(x + 0.5, high, x + 0.5, low, '#333');
  if (up) {
    add('rect', { x: x - 1.5, y: top + 0.5, width: 4, height: Math.max(bottom - top - 1, 1), fill: '#75b878', stroke: '#233a24' });
  } else {
    box(x - 2, top, 5, bottom - top, '#000');
  }
});
line(763.5, 101, 763.5, 103, '#333');

// Notes
label(634.5, 123, 'mid title', 'Profit Interbank');
label(634.5, 141, 'mid sub', 'IG - Guzz_Trader');
label(666, 289, 'end note buyside', 'Pre Market Session Buy Side Liquidity');
label(496, 569, 'end note sellside', 'Pre Market Session Sell Side Liquidity');
label(316.5, 335, 'mid tiny', 'MACRO');
label(316.5, 342, 'mid tiny', '8:50 - 9:10');
label(610, 397, 'note', 'Liquidity Run');
label(717, 513, 'note', "1'st Presented FVG");
line(675, 339.5, 724, 339.5, '#111');
line(766, 339.5, 813, 339.5, '#111');
add('circle', { cx: 675, cy: 339.5, r: 1.5, fill: '#000' });
label(745, 342, 'mid note', 'Break Even');
box(813, 330, 48, 19, '#000', 3);
label(837, 343, 'mid tag big', '24.831,8');

[[348, 'VAH'], [374, 'VAH'], [483, 'POC'], [517, 'POC'], [547, 'New Week Opening Gap']].forEach(([y, name]) => {
  const w = name.length > 3 ? 82 : 16;
  box(1200 - w, y - 5, w, 10, y > 540 ? '#d7d6d6' : '#dbdbdb');
  label(1198, y + 3, 'end note', name);
});

// TradingView mark and event badge
path('M73 621H82V631H78V625H73ZM88 621H94L89 631H84Z', '#fff', '#000');
add('circle', { cx: 85, cy: 623, r: 2, fill: '#000' });
add('circle', { cx: 789, cy: 632, r: 6.5, fill: '#fff', stroke: '#8b2fa2' });
path('M790 628L786 633H789L788 636L792 631H789Z', 'none', '#8b2fa2');
add('circle', { cx: 794, cy: 628, r: 2, fill: '#dc2350' });

// Crosshair and hand
line(66, 447.5, 1204, 447.5, '#555', '1 1');
line(920.5, 101, 920.5, 641, '#888');
path('M914 453C912 450 916 449 916 450C915 446 918 447 919 448C920 446 922 448 922 450C924 451 922 457 920 459H916Z', '#222', '#fff');

// Price axis
box(1204, 101, 43, 557, '#dcdcdc');
for (let p = 24920; p >= 24710; p -= 10) {
  if (p === 24850) continue;
  label(1241, priceY(p) + 3, 'end', '24.' + (p - 24000) + ',0');
}
[[293, '24.851,0', '#2c6b50'], [348, '24.828,2', '#5b5b5b'], [374, '24.817,6', '#5b5b5b'],
 [458, '24.783,3', '#000'], [447, '24.787,6', '#131722'], [483, '24.772,7', '#5b5b5b'],
 [518, '24.758,5', '#5b5b5b'], [529, '24.754,4', '#35091a'], [548, '24.746,2', '#5b5b5b']
].forEach(([y, text, fill]) => {
  box(1204, y - 6, 40, 11, fill, 1);
  label(1241, y + 3, 'end tag', text);
});
box(1189, 440, 14, 14, '#131722', 2);
add('circle', { cx: 1196, cy: 447, r: 4.5, fill: 'none', stroke: '#fff' });
path('M1193.5 447H1198.5M1196 444.5V449.5', '#fff');

// Time axis
box(66, 641, 1181, 17, '#dcdcdc');
for (let i = 0; i <= 165; i += 15) {
  const m = 510 + i;
  const text = String(Math.floor(m / 60)).padStart(2, '0') + ':' + String(m % 60).padStart(2, '0');
  label(barX(i), 653, m % 60 === 0 ? 'mid hour' : 'mid', text);
}
box(876, 641, 91, 16, '#131722');
label(881, 653, 'tag', "mié 18 Feb '26");
label(961, 653, 'end tag', '10:36');
path('M1223 646H1228L1231 650L1228 654H1223L1220 650Z', '#333');
add('circle', { cx: 1225.5, cy: 650, r: 1.5, fill: 'none', stroke: '#333' });
```
